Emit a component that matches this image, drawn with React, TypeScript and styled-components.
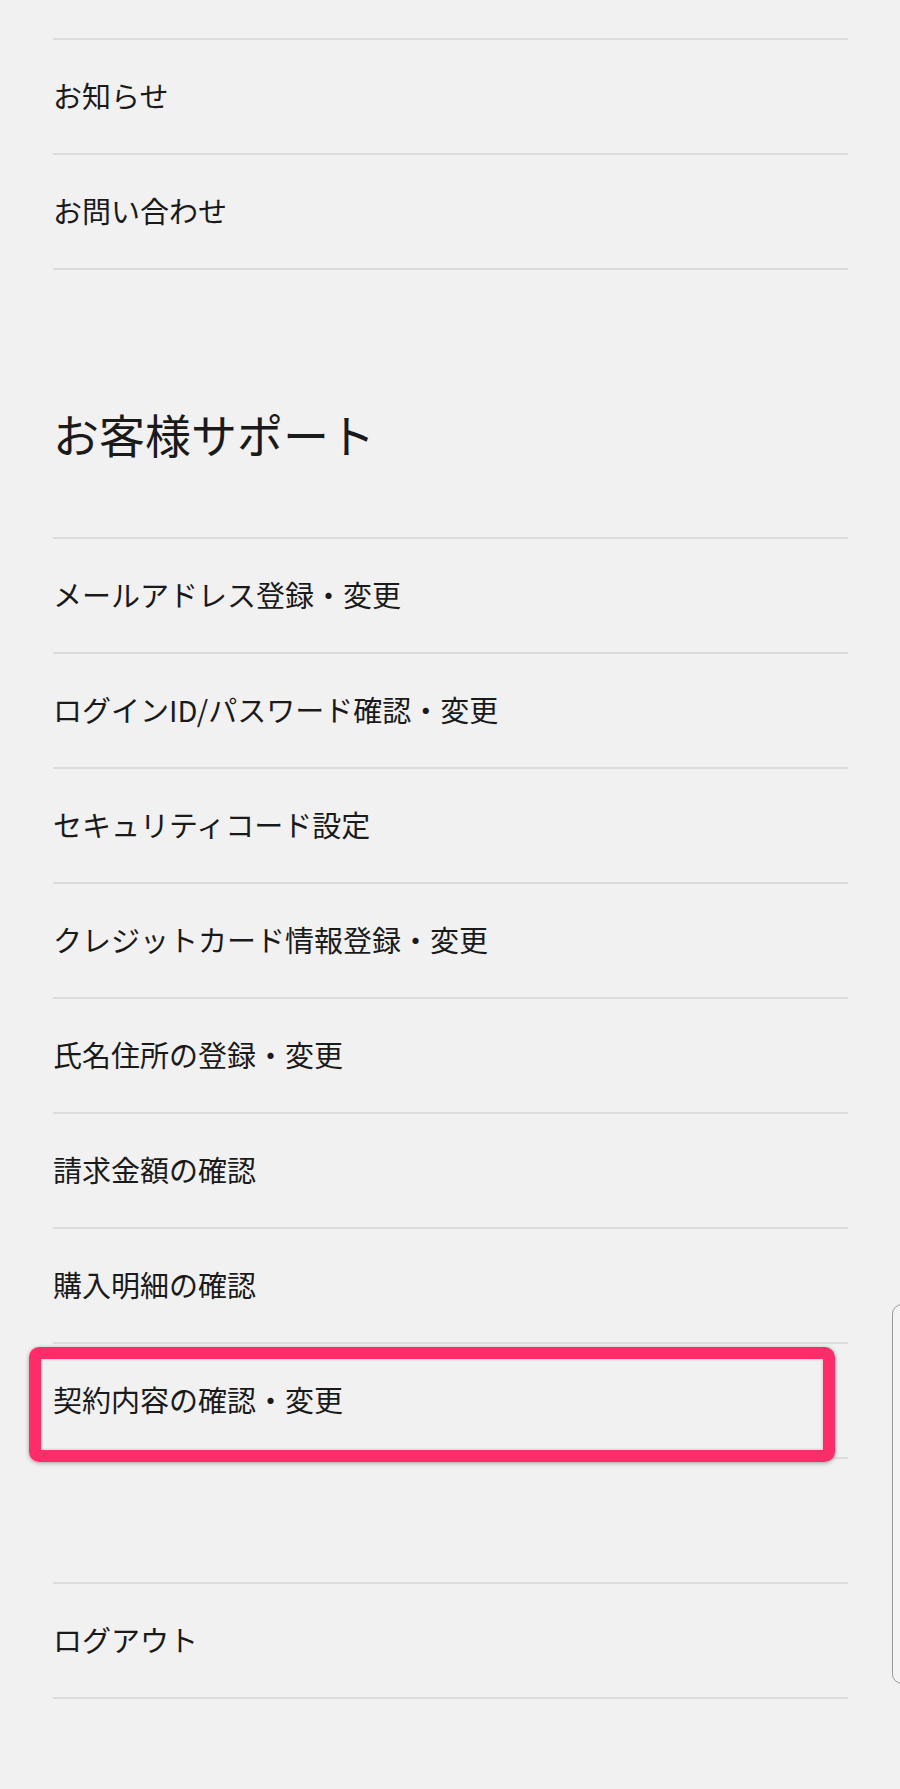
import styled, { createGlobalStyle } from 'styled-components'

const GlobalStyle = createGlobalStyle`
  html, body {
    margin: 0;
    padding: 0;
    background: #f1f1f1;
  }
  body {
    font-family: "Noto Sans CJK JP", "Noto Sans", sans-serif;
    color: #1a1a1a;
  }
`

const Page = styled.div`
  position: relative;
  display: flex;
  flex-direction: column;
  min-height: 1789px;
  padding: 38px 52px 0 53px;
  box-sizing: border-box;
  overflow: hidden;
`

const Group = styled.ul`
  display: flex;
  flex-direction: column;
  list-style: none;
  margin: 0;
  padding: 0;
  border-top: 2px solid #dcdcdc;
`

const Row = styled.li`
  position: relative;
  height: 110px;
  padding-bottom: 3px;
  display: flex;
  align-items: center;
  border-bottom: 2px solid #dcdcdc;
  font-size: 29px;
  line-height: 1;
`

const SectionTitle = styled.h2`
  margin: 0;
  height: 267px;
  box-sizing: border-box;
  padding-top: 133px;
  font-size: 46px;
  font-weight: 400;
  line-height: 60px;
`

const Spacer = styled.div<{ $h: number }>`
  height: ${(p) => p.$h}px;
`

const Highlight = styled.div`
  position: absolute;
  top: 3px;
  left: -24px;
  right: 13px;
  bottom: -5px;
  border: 12px solid #fc2d68;
  border-radius: 10px;
  box-shadow: 0 1px 4px rgba(0, 0, 0, 0.35), inset 0 0 3px rgba(0, 0, 0, 0.25);
  pointer-events: none;
`

const EdgeHandle = styled.div`
  position: absolute;
  top: 1304px;
  left: 892px;
  width: 30px;
  height: 378px;
  border: 1px solid #9a9a9a;
  border-radius: 10px;
  background: #f4f4f4;
`

const topItems = ['お知らせ', 'お問い合わせ']

const supportItems = [
  'メールアドレス登録・変更',
  'ログインID/パスワード確認・変更',
  'セキュリティコード設定',
  'クレジットカード情報登録・変更',
  '氏名住所の登録・変更',
  '請求金額の確認',
  '購入明細の確認',
  '契約内容の確認・変更',
]

export default function App() {
  return (
    <>
      <GlobalStyle />
      <Page>
        <Group>
          {topItems.map((t) => (
            <Row key={t}>{t}</Row>
          ))}
        </Group>

        <SectionTitle>お客様サポート</SectionTitle>

        <Group>
          {supportItems.map((t) => (
            <Row key={t}>
              {t}
              {t === '契約内容の確認・変更' && <Highlight />}
            </Row>
          ))}
        </Group>

        <Spacer $h={123} />

        <Group>
          <Row>ログアウト</Row>
        </Group>

        <EdgeHandle />
      </Page>
    </>
  )
}
